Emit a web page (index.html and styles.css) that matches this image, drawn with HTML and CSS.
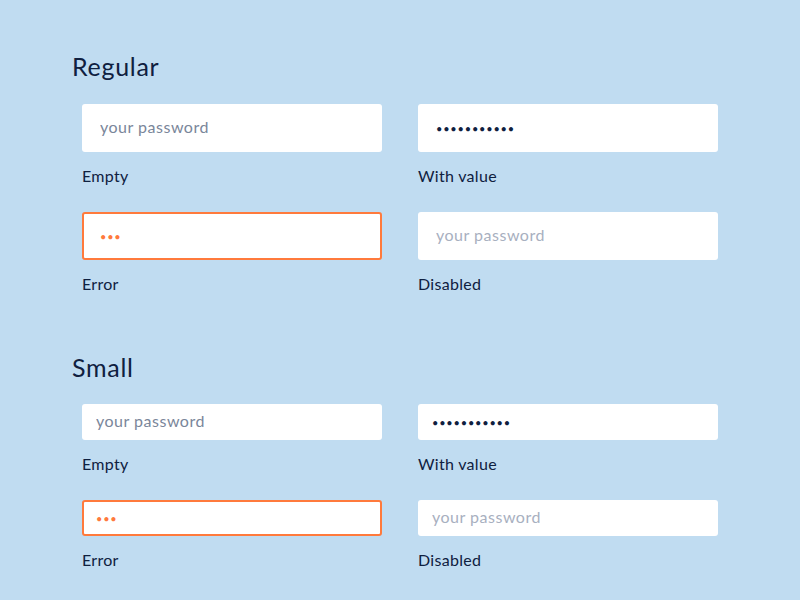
FILE: index.html
```html
<!DOCTYPE html>
<html lang="en">
<head>
<meta charset="utf-8">
<title>Password inputs</title>
<link rel="stylesheet" href="styles.css">
</head>
<body>
<main class="page">
  <section class="group">
    <h2 class="group-title">Regular</h2>
    <div class="grid">
      <div class="field">
        <input class="input" type="password" placeholder="your password">
        <span class="label">Empty</span>
      </div>
      <div class="field">
        <input class="input" type="password" value="abcdefghijk">
        <span class="label">With value</span>
      </div>
      <div class="field">
        <input class="input input-error" type="password" value="abc">
        <span class="label">Error</span>
      </div>
      <div class="field">
        <input class="input" type="password" placeholder="your password" disabled>
        <span class="label">Disabled</span>
      </div>
    </div>
  </section>
  <section class="group group-small">
    <h2 class="group-title">Small</h2>
    <div class="grid">
      <div class="field">
        <input class="input input-small" type="password" placeholder="your password">
        <span class="label">Empty</span>
      </div>
      <div class="field">
        <input class="input input-small" type="password" value="abcdefghijk">
        <span class="label">With value</span>
      </div>
      <div class="field">
        <input class="input input-small input-error" type="password" value="abc">
        <span class="label">Error</span>
      </div>
      <div class="field">
        <input class="input input-small" type="password" placeholder="your password" disabled>
        <span class="label">Disabled</span>
      </div>
    </div>
  </section>
</main>
</body>
</html>
```

FILE: styles.css
```css
* { box-sizing: border-box; }

html, body {
  margin: 0;
  padding: 0;
  background: #c0dcf1;
}

body {
  font-family: "Lato", "Noto Sans", sans-serif;
  color: #0f2040;
  width: 800px;
  height: 600px;
  overflow: hidden;
}

.page {
  padding: 52px 0 0 72px;
}

.group-title {
  margin: 0;
  font-size: 25px;
  line-height: 28px;
  font-weight: 400;
  letter-spacing: 0.7px;
  color: #0f2040;
}

.grid {
  display: grid;
  grid-template-columns: 300px 300px;
  column-gap: 36px;
  row-gap: 26px;
  margin: 24px 0 0 10px;
}

.group-small {
  margin-top: 59px;
}

.group-small .grid {
  margin-top: 23px;
}

.field {
  display: flex;
  flex-direction: column;
  gap: 14px;
}

.input {
  display: block;
  width: 300px;
  height: 48px;
  padding: 0 18px;
  border: none;
  border-radius: 3px;
  background: #ffffff;
  font-family: inherit;
  font-size: 11px;
  color: #0f2040;
  letter-spacing: 0.8px;
  outline: none;
}

.input::placeholder {
  font-size: 16px;
  color: #7a869a;
  letter-spacing: 0.5px;
}

.input:disabled {
  background: #ffffff;
}

.input:disabled::placeholder {
  color: #a8b0bf;
}

.input-error {
  border: 2px solid #ff7a3c;
  padding: 0 16px;
  color: #ff7a3c;
}

.input-small {
  height: 36px;
  padding: 0 14px;
}

.input-small.input-error {
  padding: 0 12px;
}

.label {
  display: block;
  font-size: 16px;
  line-height: 20px;
  letter-spacing: 0.3px;
  color: #0f2040;
}
```
